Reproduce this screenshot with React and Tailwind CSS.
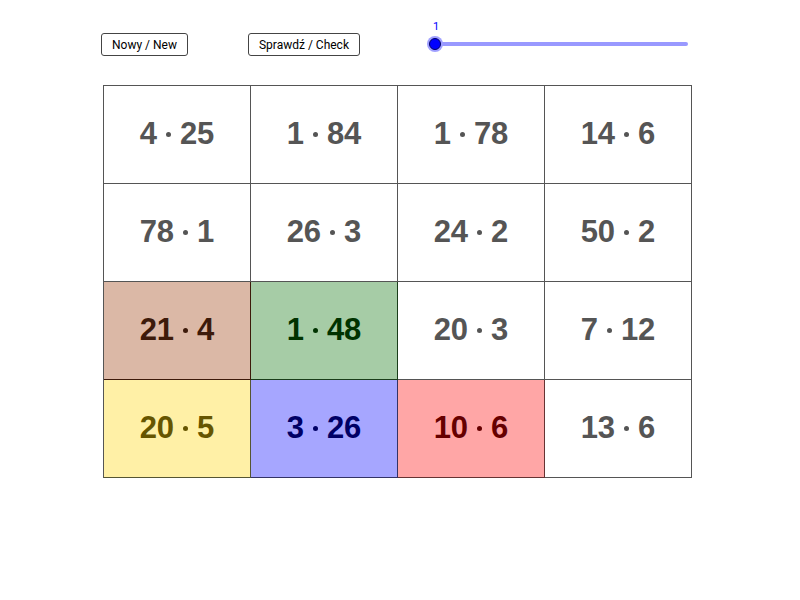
import React from 'react'

const cells = [
  { t: ['4', '25'] }, { t: ['1', '84'] }, { t: ['1', '78'] }, { t: ['14', '6'] },
  { t: ['78', '1'] }, { t: ['26', '3'] }, { t: ['24', '2'] }, { t: ['50', '2'] },
  { t: ['21', '4'], cls: 'bg-[#dbb8a6] text-[#3d1a0a] border-[#3d1a0a]' },
  { t: ['1', '48'], cls: 'bg-[#a6cca6] text-[#003300] border-[#1a3d1a]' },
  { t: ['20', '3'] }, { t: ['7', '12'] },
  { t: ['20', '5'], cls: 'bg-[#fff0a6] text-[#665500] border-[#555533]' },
  { t: ['3', '26'], cls: 'bg-[#a6a6ff] text-[#000066] border-[#333366]' },
  { t: ['10', '6'], cls: 'bg-[#ffa6a6] text-[#660000] border-[#663333]' },
  { t: ['13', '6'] },
]

export default function App() {
  return (
    <div className="w-[800px] h-[600px] bg-white relative font-['Roboto',sans-serif]">
      <div className="flex items-center pt-[33px] pl-[101px] h-[56px]">
        <button className="h-[23px] px-[10px] border border-[#444] rounded-[3px] text-[12px] text-black bg-white leading-none">
          Nowy / New
        </button>
        <button className="ml-[60px] h-[23px] px-[10px] border border-[#444] rounded-[3px] text-[12px] text-black bg-white leading-none">
          Sprawdź / Check
        </button>
        <div className="ml-[68px] relative w-[262px] h-[23px]">
          <span className="absolute left-[5px] top-[-12px] text-[11px] text-[#0000ff] leading-none">1</span>
          <div className="absolute left-[8px] right-[2px] top-[9px] h-[4px] bg-[#9999ff] rounded-r-full" />
          <div className="absolute left-[-1px] top-[3px] w-[16px] h-[16px] rounded-full bg-[#a0a0ff] flex items-center justify-center">
            <div className="w-[12px] h-[12px] rounded-full bg-[#0000ff] border border-[#000066]" />
          </div>
        </div>
      </div>
      <div className="mt-[29px] ml-[103px] w-[589px] grid grid-cols-4 border-t border-l border-[#555]">
        {cells.map((c, i) => (
          <div
            key={i}
            className={`h-[98px] border-r border-b flex items-center justify-center font-['Liberation_Sans',sans-serif] font-bold text-[31px] leading-none pb-[3px] ${c.cls || 'bg-white text-[#555] border-[#555]'}`}
          >
            <span>{c.t[0]}</span>
            <span className="mx-[9px] mt-[3px] w-[5px] h-[5px] rounded-full bg-current" />
            <span>{c.t[1]}</span>
          </div>
        ))}
      </div>
    </div>
  )
}
